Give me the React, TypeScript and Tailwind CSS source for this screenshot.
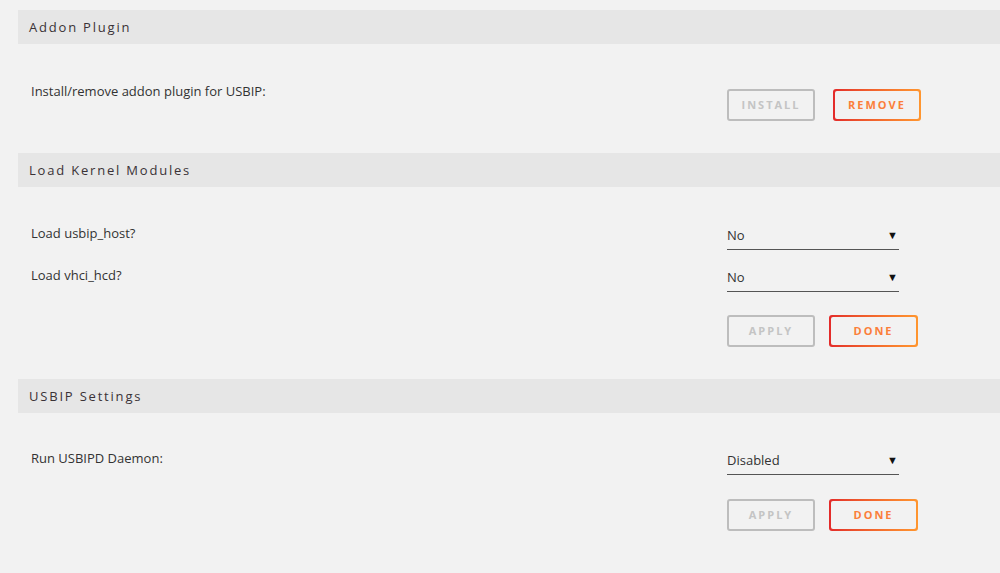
import React from 'react';

const font = { fontFamily: '"Open Sans", "Liberation Sans", sans-serif' };

function SectionHeader({ title }: { title: string }) {
  return (
    <div className="h-[34px] bg-[#e6e6e6] px-[11px] flex items-center">
      <h2 className="text-[13px] tracking-[1.8px] text-[#3a3236] pt-[1px]">{title}</h2>
    </div>
  );
}

function GhostButton({ label }: { label: string }) {
  return (
    <button className="w-[88px] h-[32px] rounded-[3px] border-2 border-[#bdbdbd] text-[11px] font-bold tracking-[2px] text-[#c4c4c4] flex items-center justify-center">
      {label}
    </button>
  );
}

function AccentButton({ label, w = 'w-[88px]' }: { label: string; w?: string }) {
  return (
    <div className={`${w} h-[32px] rounded-[3px] p-[2px] bg-gradient-to-r from-[#e32a2a] to-[#ff962f]`}>
      <button className="w-full h-full rounded-[2px] bg-[#f2f2f2] flex items-center justify-center text-[11px] font-bold tracking-[2px] text-[#fb7f3a]">
        {label}
      </button>
    </div>
  );
}

function Select({ value }: { value: string }) {
  return (
    <div className="w-[172px] pt-[2px] pb-[5px] border-b border-[#555] flex items-center justify-between">
      <span className="text-[13px] leading-[18px] text-[#333]">{value}</span>
      <span className="text-[11px] leading-[18px] text-[#111] pr-[1px]">▼</span>
    </div>
  );
}

function Row({ label, children }: { label: string; children: React.ReactNode }) {
  return (
    <div className="flex">
      <div className="flex-1 pl-[13px] text-[13px] leading-[18px] text-[#333]">{label}</div>
      <div className="w-[273px]">{children}</div>
    </div>
  );
}

export default function App() {
  return (
    <div className="min-h-[573px] bg-[#f2f2f2] pl-[18px] pt-[10px]" style={font}>
      <section>
        <SectionHeader title="Addon Plugin" />
        <div className="pt-[38px] pb-[32px]">
          <Row label="Install/remove addon plugin for USBIP:">
            <div className="flex gap-[18px] pt-[7px]">
              <GhostButton label="INSTALL" />
              <AccentButton label="REMOVE" />
            </div>
          </Row>
        </div>
      </section>

      <section>
        <SectionHeader title="Load Kernel Modules" />
        <div className="pt-[37px] pb-[32px] flex flex-col">
          <Row label="Load usbip_host?">
            <Select value="No" />
          </Row>
          <div className="h-[16px]" />
          <Row label="Load vhci_hcd?">
            <Select value="No" />
          </Row>
          <div className="flex pl-[709px] pt-[23px] gap-[14px]">
            <GhostButton label="APPLY" />
            <AccentButton label="DONE" w="w-[89px]" />
          </div>
        </div>
      </section>

      <section>
        <SectionHeader title="USBIP Settings" />
        <div className="pt-[36px] pb-[32px] flex flex-col">
          <Row label="Run USBIPD Daemon:">
            <Select value="Disabled" />
          </Row>
          <div className="flex pl-[709px] pt-[24px] gap-[14px]">
            <GhostButton label="APPLY" />
            <AccentButton label="DONE" w="w-[89px]" />
          </div>
        </div>
      </section>
    </div>
  );
}
